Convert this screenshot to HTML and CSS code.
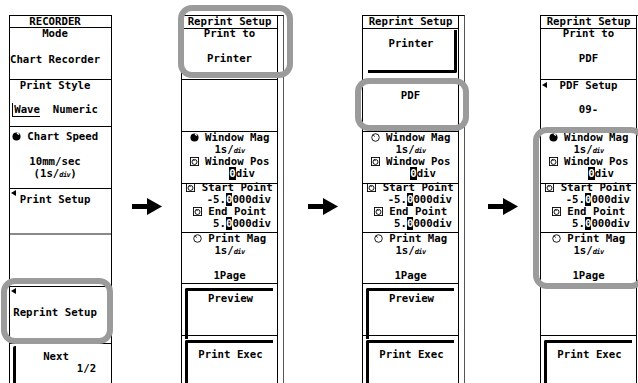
FILE: index.html
```html
<!DOCTYPE html>
<html lang="en">
<head>
  <meta charset="UTF-8">
  <title>Reprint Setup</title>
  <link rel="stylesheet" href="styles.css">
</head>
<body>
  <div class="stage">
    <!-- main recorder menu -->
    <div class="menu main">
      <div class="col">
        <div class="head">RECORDER</div>
        <div class="key k-mode">
          <div class="ln">Mode</div>
          <div class="ln gap14">Chart Recorder</div>
        </div>
        <div class="key k-style">
          <div class="ln">Print Style</div>
          <div class="ln gap12"><span class="sel">Wave</span>&nbsp;&nbsp;Numeric</div>
        </div>
        <div class="key k-speed">
          <div class="ln"><svg class="ico" viewBox="0 0 10 10"><circle cx="5" cy="5" r="4.5"/><path d="M5.5 1.2 7.8 2.8" stroke="#fff" stroke-width="1.4"/></svg> Chart Speed</div>
          <div class="ln gap13">10mm/sec</div>
          <div class="ln">(1s/<span class="dv">div</span>)</div>
        </div>
        <div class="key k-psetup">
          <span class="mark"></span>
          <div class="ln">Print Setup</div>
        </div>
        <div class="key k-blank1"></div>
        <div class="key k-reprint">
          <span class="mark"></span>
          <div class="ln">Reprint Setup</div>
        </div>
        <div class="key k-next">
          <div class="frame side">
            <div class="ln">Next</div>
            <div class="ln right">1/2</div>
          </div>
        </div>
      </div>
    </div>

    <div class="step step-a">
      <svg class="arrow" viewBox="0 0 30 17"><path d="M0 6h15V0l15 8.5L15 17v-6H0z"/></svg>
    </div>

    <!-- reprint setup, print to printer -->
    <div class="menu sub">
      <div class="col">
        <div class="head sub-head">Reprint Setup</div>
        <div class="key k-to">
          <div class="ln up1">Print to</div>
          <div class="ln gap13">Printer</div>
        </div>
        <div class="key k-52"></div>
        <div class="key k-52">
          <div class="ln"><svg class="ico" viewBox="0 0 10 10"><circle cx="5" cy="5" r="4.5"/><path d="M5.5 1.2 7.8 2.8" stroke="#fff" stroke-width="1.4"/></svg> Window Mag</div>
          <div class="ln">1s/<span class="dv">div</span></div>
          <div class="ln"><svg class="ico" viewBox="0 0 10 10"><rect x=".5" y=".5" width="9" height="9" fill="none" stroke="#000"/><circle cx="5" cy="5.5" r="2.8" fill="none" stroke="#000"/><path d="M3.5 2.5 5 4.5" stroke="#000"/></svg> Window Pos</div>
          <div class="ln pos"><span class="cur">0</span>div</div>
        </div>
        <div class="key k-49">
          <div class="ln up2"><svg class="ico" viewBox="0 0 10 10"><rect x=".5" y=".5" width="9" height="9" fill="none" stroke="#000"/><circle cx="5" cy="5.5" r="2.8" fill="none" stroke="#000"/><path d="M3.5 2.5 5 4.5" stroke="#000"/></svg> Start Point</div>
          <div class="ln val">-5.<span class="cur">0</span>000div</div>
          <div class="ln"><svg class="ico" viewBox="0 0 10 10"><rect x=".5" y=".5" width="9" height="9" fill="none" stroke="#000"/><circle cx="5" cy="5.5" r="2.8" fill="none" stroke="#000"/><path d="M3.5 2.5 5 4.5" stroke="#000"/></svg> End Point</div>
          <div class="ln val">5.<span class="cur">0</span>000div</div>
        </div>
        <div class="key k-51">
          <div class="ln"><svg class="ico" viewBox="0 0 10 10"><circle cx="5" cy="5" r="4.2" fill="none" stroke="#000"/><path d="M2.5 2.2 4 4" stroke="#000"/></svg> Print Mag</div>
          <div class="ln">1s/<span class="dv">div</span></div>
          <div class="ln gap13">1Page</div>
        </div>
        <div class="key k-52">
          <div class="frame">
            <div class="ln">Preview</div>
          </div>
        </div>
        <div class="key k-last">
          <div class="frame">
            <div class="ln low">Print Exec</div>
          </div>
        </div>
      </div>
      <div class="strip"></div>
    </div>

    <div class="step step-b">
      <svg class="arrow" viewBox="0 0 30 17"><path d="M0 6h15V0l15 8.5L15 17v-6H0z"/></svg>
    </div>

    <!-- print to list open -->
    <div class="menu sub">
      <div class="col">
        <div class="head sub-head">Reprint Setup</div>
        <div class="key k-to plain">
          <div class="opt">
            <div class="ln">Printer</div>
          </div>
        </div>
        <div class="key k-52">
          <div class="ln pdf">PDF</div>
        </div>
        <div class="key k-52">
          <div class="ln"><svg class="ico" viewBox="0 0 10 10"><circle cx="5" cy="5" r="4.2" fill="none" stroke="#000"/><path d="M2.5 2.2 4 4" stroke="#000"/></svg> Window Mag</div>
          <div class="ln">1s/<span class="dv">div</span></div>
          <div class="ln"><svg class="ico" viewBox="0 0 10 10"><rect x=".5" y=".5" width="9" height="9" fill="none" stroke="#000"/><circle cx="5" cy="5.5" r="2.8" fill="none" stroke="#000"/><path d="M3.5 2.5 5 4.5" stroke="#000"/></svg> Window Pos</div>
          <div class="ln pos"><span class="cur">0</span>div</div>
        </div>
        <div class="key k-49">
          <div class="ln up2"><svg class="ico" viewBox="0 0 10 10"><rect x=".5" y=".5" width="9" height="9" fill="none" stroke="#000"/><circle cx="5" cy="5.5" r="2.8" fill="none" stroke="#000"/><path d="M3.5 2.5 5 4.5" stroke="#000"/></svg> Start Point</div>
          <div class="ln val">-5.<span class="cur">0</span>000div</div>
          <div class="ln"><svg class="ico" viewBox="0 0 10 10"><rect x=".5" y=".5" width="9" height="9" fill="none" stroke="#000"/><circle cx="5" cy="5.5" r="2.8" fill="none" stroke="#000"/><path d="M3.5 2.5 5 4.5" stroke="#000"/></svg> End Point</div>
          <div class="ln val">5.<span class="cur">0</span>000div</div>
        </div>
        <div class="key k-51">
          <div class="ln"><svg class="ico" viewBox="0 0 10 10"><circle cx="5" cy="5" r="4.2" fill="none" stroke="#000"/><path d="M2.5 2.2 4 4" stroke="#000"/></svg> Print Mag</div>
          <div class="ln">1s/<span class="dv">div</span></div>
          <div class="ln gap13">1Page</div>
        </div>
        <div class="key k-52">
          <div class="frame">
            <div class="ln">Preview</div>
          </div>
        </div>
        <div class="key k-last">
          <div class="frame">
            <div class="ln low">Print Exec</div>
          </div>
        </div>
      </div>
      <div class="strip"></div>
    </div>

    <div class="step step-c">
      <svg class="arrow" viewBox="0 0 30 17"><path d="M0 6h15V0l15 8.5L15 17v-6H0z"/></svg>
    </div>

    <!-- print to pdf -->
    <div class="menu sub">
      <div class="col">
        <div class="head sub-head">Reprint Setup</div>
        <div class="key k-to">
          <div class="ln up1">Print to</div>
          <div class="ln gap13">PDF</div>
        </div>
        <div class="key k-52">
          <span class="mark mark-mid"></span>
          <div class="ln">PDF Setup</div>
          <div class="ln gap12">09-</div>
        </div>
        <div class="key k-52">
          <div class="ln"><svg class="ico" viewBox="0 0 10 10"><circle cx="5" cy="5" r="4.5"/><path d="M5.5 1.2 7.8 2.8" stroke="#fff" stroke-width="1.4"/></svg> Window Mag</div>
          <div class="ln">1s/<span class="dv">div</span></div>
          <div class="ln"><svg class="ico" viewBox="0 0 10 10"><rect x=".5" y=".5" width="9" height="9" fill="none" stroke="#000"/><circle cx="5" cy="5.5" r="2.8" fill="none" stroke="#000"/><path d="M3.5 2.5 5 4.5" stroke="#000"/></svg> Window Pos</div>
          <div class="ln pos"><span class="cur">0</span>div</div>
        </div>
        <div class="key k-49">
          <div class="ln up2"><svg class="ico" viewBox="0 0 10 10"><rect x=".5" y=".5" width="9" height="9" fill="none" stroke="#000"/><circle cx="5" cy="5.5" r="2.8" fill="none" stroke="#000"/><path d="M3.5 2.5 5 4.5" stroke="#000"/></svg> Start Point</div>
          <div class="ln val">-5.<span class="cur">0</span>000div</div>
          <div class="ln"><svg class="ico" viewBox="0 0 10 10"><rect x=".5" y=".5" width="9" height="9" fill="none" stroke="#000"/><circle cx="5" cy="5.5" r="2.8" fill="none" stroke="#000"/><path d="M3.5 2.5 5 4.5" stroke="#000"/></svg> End Point</div>
          <div class="ln val">5.<span class="cur">0</span>000div</div>
        </div>
        <div class="key k-51">
          <div class="ln"><svg class="ico" viewBox="0 0 10 10"><circle cx="5" cy="5" r="4.2" fill="none" stroke="#000"/><path d="M2.5 2.2 4 4" stroke="#000"/></svg> Print Mag</div>
          <div class="ln">1s/<span class="dv">div</span></div>
          <div class="ln gap13">1Page</div>
        </div>
        <div class="key k-52"></div>
        <div class="key k-last">
          <div class="frame">
            <div class="ln low">Print Exec</div>
          </div>
        </div>
      </div>
      <div class="strip"></div>
    </div>

    <!-- highlight rings -->
    <div class="hl hl-rec"></div>
    <div class="hl hl-to"></div>
    <div class="hl hl-pdf"></div>
    <div class="hl hl-set"></div>
  </div>
</body>
</html>
```

FILE: styles.css
```css
body {
  margin: 0;
  background-color: #ffffff;
}
.stage {
  position: relative;
  display: flex;
  align-items: flex-start;
  width: 638px;
  height: 383px;
  overflow: hidden;
  padding: 15px 0 0 9px;
  box-sizing: border-box;
  font-family: "DejaVu Sans Mono", "Liberation Mono", monospace;
  font-weight: bold;
  font-size: 10.7px;
  line-height: 12px;
  color: #000000;
}
.menu {
  flex: none;
  display: flex;
  height: 380px;
  border: 1px solid #000000;
  border-bottom: 0;
  box-sizing: border-box;
}
.main {
  width: 103px;
}
.main .col {
  padding-right: 11px;
}
.main .key,
.main .head {
  margin-right: -11px;
  padding-right: 11px;
}
.sub {
  width: 103px;
  border-right-color: #555555;
}
.col {
  display: flex;
  flex-direction: column;
  flex: 1;
}
.sub .col {
  flex: none;
  width: 96px;
  border-right: 1px solid #000000;
  box-sizing: border-box;
}
.strip {
  flex: 1;
}
.head {
  height: 12px;
  line-height: 11px;
  border-bottom: 1px solid #000000;
  box-sizing: border-box;
  text-align: center;
}
.sub-head {
  height: 13px;
  line-height: 12px;
}
.key {
  position: relative;
  flex: none;
  border-bottom: 1px solid #000000;
  box-sizing: border-box;
  text-align: center;
}
.ln {
  height: 12px;
  white-space: nowrap;
}
.gap12 { margin-top: 12px; }
.gap13 { margin-top: 13px; }
.gap14 { margin-top: 14px; }
.up1 { margin-top: -1px; }
.up2 { margin-top: -2px; }

/* main menu keys */
.k-mode { height: 52px; }
.k-style { height: 47px; }
.k-speed {
  height: 62px;
  padding-top: 4px;
}
.k-psetup {
  height: 46px;
  padding-top: 5px;
  border-bottom: 2px solid #8a8a8a;
}
.k-blank1 { height: 52px; }
.k-reprint {
  height: 57px;
  padding-top: 20px;
}
.k-next {
  flex: 1;
  border-bottom: 0;
}
.frame {
  height: 100%;
  margin: 4px 4px 0 3px;
  border-top: 3px solid #000000;
  border-left: 3px solid #000000;
  border-top-left-radius: 2px;
  box-sizing: border-box;
  padding-top: 2px;
}
.frame.side {
  margin-top: 2px;
  border-top: 0;
  padding-top: 5px;
}
.right {
  text-align: right;
  padding-right: 0;
}

/* sub menu keys */
.k-to { height: 51px; }
.k-52 { height: 52px; }
.k-49 { height: 49px; }
.k-51 { height: 51px; }
.k-last {
  flex: 1;
  border-bottom: 0;
}
.low { margin-top: 4px; }
.pos {
  text-align: right;
  padding-right: 22px;
}
.val {
  text-align: right;
  padding-right: 6px;
}
.plain {
  padding: 1px 1px 0 5px;
}
.opt {
  height: 43px;
  border-right: 3px solid #000000;
  border-bottom: 3px solid #000000;
  border-bottom-right-radius: 2px;
  box-sizing: border-box;
  padding-top: 8px;
}
.pdf { margin-top: 10px; }

/* glyph pieces */
.ico {
  width: 9px;
  height: 9px;
  vertical-align: -1px;
}
.cur {
  background-color: #000000;
  color: #ffffff;
}
.dv {
  font-size: 7px;
  letter-spacing: -0.6px;
  font-style: italic;
}
.sel {
  border-left: 1px solid #000000;
  border-bottom: 1px solid #000000;
  padding-left: 1px;
}
.mark {
  position: absolute;
  left: 1px;
  top: 1px;
  width: 0;
  height: 0;
  border-top: 3.5px solid transparent;
  border-bottom: 3.5px solid transparent;
  border-right: 5px solid #000000;
}
.mark-mid {
  top: 2px;
}

/* arrows between screens */
.step {
  flex: none;
  display: flex;
  justify-content: center;
  padding-top: 183px;
}
.step-a { width: 69px; }
.step-b { width: 78px; }
.step-c { width: 75px; }
.arrow {
  width: 30px;
  height: 17px;
}

/* gray rounded highlight rings */
.hl {
  position: absolute;
  border: 6px solid #9b9b9b;
  border-radius: 14px;
  box-sizing: border-box;
}
.hl-rec {
  left: 1px;
  top: 278px;
  width: 112px;
  height: 66px;
}
.hl-to {
  left: 178px;
  top: 5px;
  width: 115px;
  height: 73px;
}
.hl-pdf {
  left: 355px;
  top: 78px;
  width: 114px;
  height: 53px;
}
.hl-set {
  left: 533px;
  top: 127px;
  width: 112px;
  height: 162px;
}
```
